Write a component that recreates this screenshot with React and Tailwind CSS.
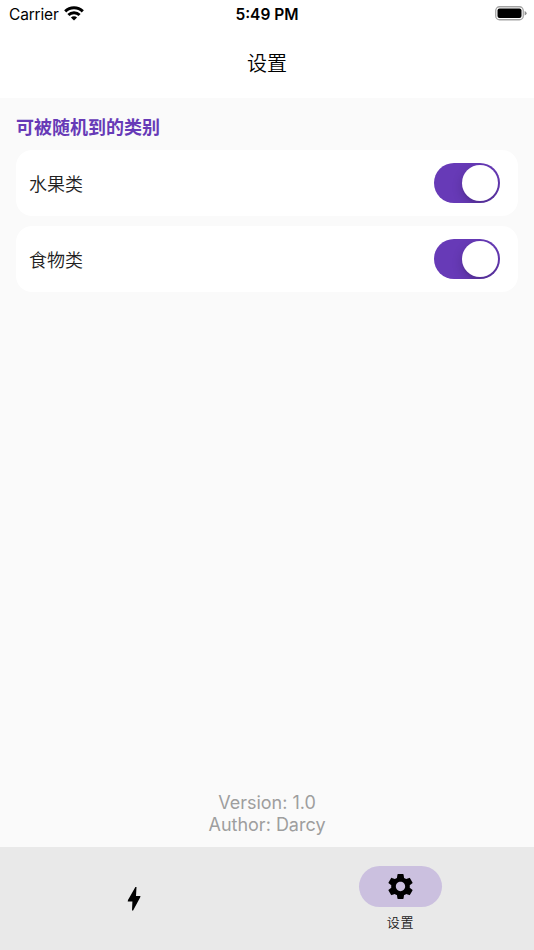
import React, { useState } from 'react';
import { MdSettings } from 'react-icons/md';

const CATEGORIES = [
  { id: 'fruit', label: '水果类' },
  { id: 'food', label: '食物类' },
];

// ── Status bar ────────────────────────────────────────────────────────────────
function WifiIcon() {
  return (
    <svg width="20" height="15" viewBox="0 0 20 15" fill="none" stroke="#000" strokeWidth="3">
      <path d="M1.2 5.4 A12.6 12.6 0 0 1 18.8 5.4" />
      <path d="M4.4 9 A8 8 0 0 1 15.6 9" />
      <path d="M10 14.5 L6.9 11.6 A4.4 4.4 0 0 1 13.1 11.6 Z" fill="#000" stroke="none" />
    </svg>
  );
}

function BatteryIcon() {
  return (
    <svg width="32" height="15" viewBox="0 0 32 15">
      <rect x="0.75" y="0.75" width="27.5" height="13" rx="3.8" fill="none" stroke="#a3a3a3" strokeWidth="1.3" />
      <rect x="2.5" y="2.5" width="24" height="9.5" rx="2" fill="#000" />
      <path d="M29.6 5 Q31.6 5.8 31.6 7.25 Q31.6 8.7 29.6 9.5 Z" fill="#8f8f8f" />
    </svg>
  );
}

function StatusBar() {
  return (
    <div className="grid h-7 grid-cols-3 items-center pl-[9px] pr-[7px] text-black">
      <div className="flex items-center gap-[5px]">
        <span className="pt-[2px] text-[15.5px] leading-6 tracking-[-0.18px]">Carrier</span>
        <span className="pb-[2px]">
          <WifiIcon />
        </span>
      </div>
      <span className="pr-[2px] pt-[2px] text-center text-[15.5px] font-semibold leading-6">5:49 PM</span>
      <div className="flex justify-end pb-[2px]">
        <BatteryIcon />
      </div>
    </div>
  );
}

// ── Category row ──────────────────────────────────────────────────────────────
function Toggle({ on, onChange }) {
  return (
    <button
      role="switch"
      aria-checked={on}
      onClick={onChange}
      className={`flex h-10 w-[66px] items-center overflow-hidden rounded-full px-[2px] ${on ? 'justify-end bg-[#673ab7]' : 'justify-start bg-gray-200'}`}
    >
      <span className="h-9 w-9 rounded-full bg-white shadow-[0_4px_11px_rgba(0,0,0,0.18),0_3px_1px_rgba(0,0,0,0.05)]" />
    </button>
  );
}

function CategoryRow({ label, on, onChange }) {
  return (
    <div className="flex h-[66px] items-center justify-between rounded-[16px] bg-white pl-[13px] pr-[18px]">
      <span className="pt-[2px] text-[18px] font-[350] text-[#212121]">{label}</span>
      <Toggle on={on} onChange={onChange} />
    </div>
  );
}

// ── Bottom navigation ─────────────────────────────────────────────────────────
function BoltIcon() {
  return (
    <svg width="14" height="26" viewBox="0 0 14 26">
      <path
        d="M8.4 1.1 L9.5 1.1 L9 9.9 L13.5 9.9 L13.1 11.6 L6.1 24.5 L5 24.5 L5.4 15.6 L0.7 15.6 L1 13.9 Z"
        fill="#000"
      />
    </svg>
  );
}

function BottomNav() {
  return (
    <nav className="grid h-[103px] grid-cols-2 bg-[#e9e9e9]">
      <button className="flex items-center justify-center">
        <BoltIcon />
      </button>
      <button className="flex flex-col items-center pt-[19px]">
        <span className="flex h-[41px] w-[83px] items-center justify-center rounded-full bg-[#cbc0df]">
          <MdSettings size={31} color="#000" />
        </span>
        <span className="mt-[5px] text-[13px] font-[350] leading-5 tracking-[0.8px] text-[#1a1a1a]">设置</span>
      </button>
    </nav>
  );
}

export default function App() {
  const [enabled, setEnabled] = useState({ fruit: true, food: true });

  return (
    <div className="flex h-screen w-full flex-col overflow-hidden bg-[#fafafa] font-['Inter','Noto_Sans_CJK_SC',sans-serif]">
      <header className="h-[98px] bg-white">
        <StatusBar />
        <h1 className="flex h-[72px] items-center justify-center text-[20px] font-[350] text-black">设置</h1>
      </header>

      <main className="flex flex-1 flex-col px-4 pt-4">
        <h2 className="text-[18px] font-bold leading-7 text-[#673ab7]">可被随机到的类别</h2>
        <div className="mt-2 flex flex-col gap-[10px]">
          {CATEGORIES.map(cat => (
            <CategoryRow
              key={cat.id}
              label={cat.label}
              on={enabled[cat.id]}
              onChange={() => setEnabled({ ...enabled, [cat.id]: !enabled[cat.id] })}
            />
          ))}
        </div>
        <div className="mt-auto pb-[11px] text-center text-[18px] leading-[22px] text-[#9e9e9e]">
          <p>Version: 1.0</p>
          <p>Author: Darcy</p>
        </div>
      </main>

      <BottomNav />
    </div>
  );
}
